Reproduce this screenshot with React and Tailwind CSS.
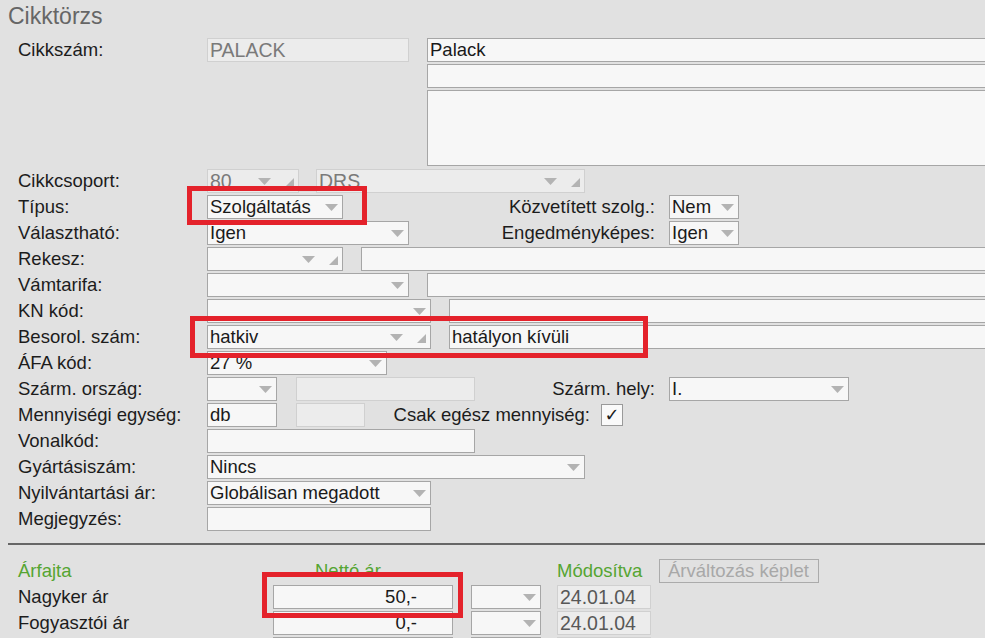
import React from 'react';

const Arrow = () => (
  <svg width="13" height="7" viewBox="0 0 13 7" className="shrink-0">
    <path d="M0 0H13L6.5 7Z" fill="#b3b3b3" />
  </svg>
);

const Grip = () => (
  <svg width="9" height="9" viewBox="0 0 9 9" className="shrink-0 mt-[3px]">
    <path d="M9 0V9H0Z" fill="#b3b3b3" />
  </svg>
);

const Field = ({ className = '', value, disabled, right, dim }) => (
  <div
    className={`h-[24px] flex items-center px-[2px] border whitespace-nowrap overflow-hidden ${
      disabled ? 'bg-[#ececec] border-[#d0d0d0] text-[19.5px]' : 'bg-[#f7f7f7] border-[#a6a6a6]'
    } ${dim ? 'text-[#585858]' : disabled ? 'text-[#7a7a7a]' : 'text-[#1a1a1a]'} ${
      right ? 'justify-end pr-[35px]' : ''
    } ${className}`}
  >
    {value}
  </div>
);

const Combo = ({ className = '', value, disabled, grip }) => (
  <div
    className={`h-[24px] flex items-center pl-[2px] pr-[4px] border whitespace-nowrap ${
      disabled
        ? 'bg-[#ececec] border-[#d0d0d0] text-[#7a7a7a] text-[19.5px]'
        : 'bg-[#f7f7f7] border-[#a6a6a6] text-[#1a1a1a]'
    } ${className}`}
  >
    <span className="flex-1 overflow-hidden">{value}</span>
    <Arrow />
    {grip && (
      <>
        <span className="w-[14px] shrink-0" />
        <Grip />
      </>
    )}
  </div>
);

const Row = ({ label, children }) => (
  <div className="h-[26px] flex items-center pl-[18px]">
    <div className="w-[189px] shrink-0 whitespace-nowrap">{label}</div>
    {children}
  </div>
);

const SideLabel = ({ className = '', children }) => (
  <div className={`text-right whitespace-nowrap shrink-0 ${className}`}>{children}</div>
);

const PriceRow = ({ label, value }) => (
  <div className="h-[26px] flex items-center pl-[18px]">
    <div className="w-[255px] shrink-0 whitespace-nowrap">{label}</div>
    <Field className="w-[180px]" value={value} right />
    <Combo className="w-[70px] ml-[18px]" />
    <Field className="w-[94px] ml-[16px]" value={value !== undefined ? '24.01.04' : ''} disabled dim />
  </div>
);

export default function App() {
  return (
    <div className="relative w-[985px] h-[638px] overflow-hidden bg-[#e1e1e1] text-[18.5px] leading-[22px] text-[#1c1c1c] font-['Liberation_Sans',Arial,sans-serif]">
      <div className="w-[1000px]">
        <div className="h-[37px] pl-[8px] pt-[3px] text-[23px] leading-[26px] text-[#666]">Cikktörzs</div>

        <div className="flex h-[131px] pl-[18px]">
          <div className="w-[189px] h-[26px] flex items-center shrink-0">Cikkszám:</div>
          <div className="pt-[1px]">
            <Field className="w-[202px]" value="PALACK" disabled />
          </div>
          <div className="flex-1 ml-[18px] pt-[1px] flex flex-col gap-[2px]">
            <Field value="Palack" />
            <Field value="" />
            <div className="h-[76px] bg-[#f7f7f7] border border-[#a6a6a6]" />
          </div>
        </div>

        <Row label="Cikkcsoport:">
          <Combo className="w-[92px]" value="80" disabled grip />
          <Combo className="w-[269px] ml-[17px]" value="DRS" disabled grip />
        </Row>
        <Row label="Típus:">
          <Combo className="w-[136px]" value="Szolgáltatás" />
          <SideLabel className="w-[312px]">Közvetített szolg.:</SideLabel>
          <Combo className="w-[70px] ml-[14px]" value="Nem" />
        </Row>
        <Row label="Választható:">
          <Combo className="w-[202px]" value="Igen" />
          <SideLabel className="w-[246px]">Engedményképes:</SideLabel>
          <Combo className="w-[70px] ml-[14px]" value="Igen" />
        </Row>
        <Row label="Rekesz:">
          <Combo className="w-[136px]" grip />
          <Field className="flex-1 ml-[18px]" />
        </Row>
        <Row label="Vámtarifa:">
          <Combo className="w-[202px]" />
          <Field className="flex-1 ml-[18px]" />
        </Row>
        <Row label="KN kód:">
          <Combo className="w-[224px]" />
          <Field className="flex-1 ml-[18px]" />
        </Row>
        <Row label="Besorol. szám:">
          <Combo className="w-[224px]" value="hatkiv" grip />
          <Field className="flex-1 ml-[18px]" value="hatályon kívüli" />
        </Row>
        <Row label="ÁFA kód:">
          <Combo className="w-[180px]" value="27 %" />
        </Row>
        <Row label="Szárm. ország:">
          <Combo className="w-[70px]" />
          <Field className="w-[179px] ml-[19px]" disabled />
          <SideLabel className="w-[180px]">Szárm. hely:</SideLabel>
          <Combo className="w-[180px] ml-[14px]" value="I." />
        </Row>
        <Row label="Mennyiségi egység:">
          <Field className="w-[70px]" value="db" />
          <Field className="w-[69px] ml-[19px]" disabled />
          <SideLabel className="w-[225px]">Csak egész mennyiség:</SideLabel>
          <div className="w-[22px] h-[22px] ml-[11px] flex items-center justify-center bg-[#fafafa] border border-[#9a9a9a] text-[18px] leading-none font-['DejaVu_Sans',sans-serif]">
            ✓
          </div>
        </Row>
        <Row label="Vonalkód:">
          <Field className="w-[268px]" />
        </Row>
        <Row label="Gyártásiszám:">
          <Combo className="w-[378px]" value="Nincs" />
        </Row>
        <Row label="Nyilvántartási ár:">
          <Combo className="w-[224px]" value="Globálisan megadott" />
        </Row>
        <Row label="Megjegyzés:">
          <Field className="w-[224px]" />
        </Row>

        <div className="mt-[11px] ml-[8px] h-[2px] bg-[#666]" />

        <div className="mt-[13px] h-[26px] flex items-center pl-[18px] text-[#55a532]">
          <div className="w-[297px] shrink-0">Árfajta</div>
          <div className="w-[242px] shrink-0">Nettó ár</div>
          <div className="w-[102px] shrink-0">Módosítva</div>
          <div className="w-[160px] h-[24px] flex items-center px-[8px] border border-[#ababab] text-[#a8a8a8] whitespace-nowrap">
            Árváltozás képlet
          </div>
        </div>
        <PriceRow label="Nagyker ár" value="50,-" />
        <PriceRow label="Fogyasztói ár" value="0,-" />
        <PriceRow label="" />
      </div>

      <div className="absolute left-[187px] top-[186px] w-[180px] h-[39px] border-[5px] border-[#e4222b]" />
      <div className="absolute left-[190px] top-[316px] w-[458px] h-[42px] border-[5px] border-[#e4222b]" />
      <div className="absolute left-[262px] top-[572px] w-[201px] h-[46px] border-[5px] border-[#e4222b]" />
    </div>
  );
}
